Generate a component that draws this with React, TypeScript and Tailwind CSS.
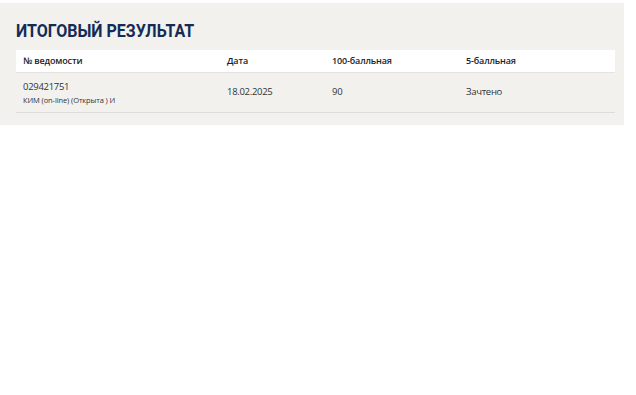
import React from "react";

export default function App() {
  return (
    <div className="w-[636px] h-[395px] bg-white" style={{ fontFamily: '"Open Sans", "Noto Sans", sans-serif' }}>
      <div className="h-[3px]" />
      <div className="w-[624px] bg-[#f2f1ee] pl-4 pr-[9px] pt-[16px] pb-[12px]">
        <h1
          className="text-[18px] leading-[24px] font-bold text-[#142c55] origin-left scale-x-[0.89] whitespace-nowrap"
          style={{ fontFamily: 'Roboto, "Open Sans", sans-serif' }}
        >
          ИТОГОВЫЙ РЕЗУЛЬТАТ
        </h1>
        <div className="mt-[7px]">
          <div className="grid grid-cols-[204px_105px_134px_1fr] bg-white h-[23px] items-center text-[9px] tracking-[-0.15px] font-semibold text-[#222] border-b border-[#e4e3e0]">
            <div className="pl-[7px]">№ ведомости</div>
            <div className="pl-[7px]">Дата</div>
            <div className="pl-[7px]">100-балльная</div>
            <div className="pl-[7px]">5-балльная</div>
          </div>
          <div className="grid grid-cols-[204px_105px_134px_1fr] h-[40px] items-center text-[9.5px] tracking-[-0.3px] text-[#333] border-b border-[#dddcd8]">
            <div className="pl-[7px] flex flex-col">
              <span className="leading-[14px]">029421751</span>
              <span className="text-[7.5px] leading-[12px] tracking-[-0.1px]">КИМ (on-line) (Открыта ) И</span>
            </div>
            <div className="pl-[7px]">18.02.2025</div>
            <div className="pl-[7px]">90</div>
            <div className="pl-[7px]">Зачтено</div>
          </div>
        </div>
      </div>
    </div>
  );
}
